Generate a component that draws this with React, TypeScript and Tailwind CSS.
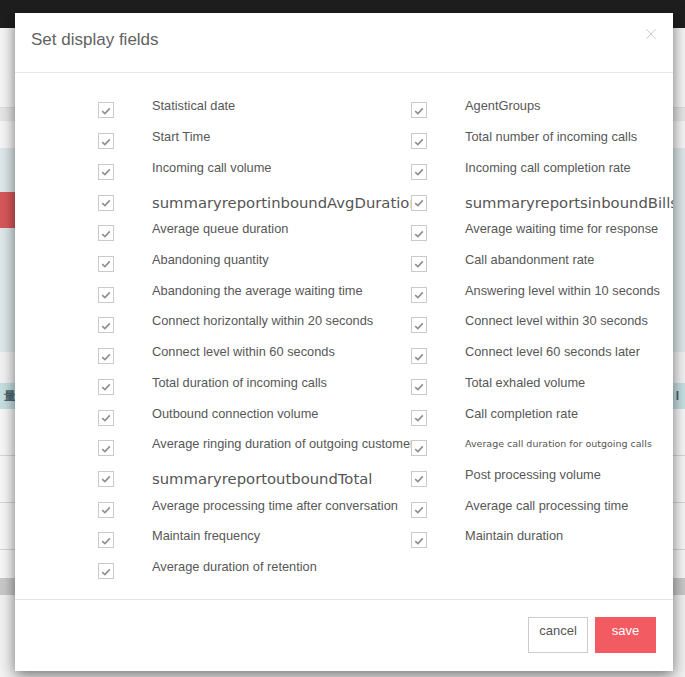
import { X } from 'lucide-react'

type Field = { label: string; kind?: 'wide' | 'small' }

const left: Field[] = [
  { label: 'Statistical date' },
  { label: 'Start Time' },
  { label: 'Incoming call volume' },
  { label: 'summaryreportinboundAvgDuration', kind: 'wide' },
  { label: 'Average queue duration' },
  { label: 'Abandoning quantity' },
  { label: 'Abandoning the average waiting time' },
  { label: 'Connect horizontally within 20 seconds' },
  { label: 'Connect level within 60 seconds' },
  { label: 'Total duration of incoming calls' },
  { label: 'Outbound connection volume' },
  { label: 'Average ringing duration of outgoing customers' },
  { label: 'summaryreportoutboundTotal', kind: 'wide' },
  { label: 'Average processing time after conversation' },
  { label: 'Maintain frequency' },
  { label: 'Average duration of retention' },
]

const right: Field[] = [
  { label: 'AgentGroups' },
  { label: 'Total number of incoming calls' },
  { label: 'Incoming call completion rate' },
  { label: 'summaryreportsinboundBillsec', kind: 'wide' },
  { label: 'Average waiting time for response' },
  { label: 'Call abandonment rate' },
  { label: 'Answering level within 10 seconds' },
  { label: 'Connect level within 30 seconds' },
  { label: 'Connect level 60 seconds later' },
  { label: 'Total exhaled volume' },
  { label: 'Call completion rate' },
  { label: 'Average call duration for outgoing calls', kind: 'small' },
  { label: 'Post processing volume' },
  { label: 'Average call processing time' },
  { label: 'Maintain duration' },
]

// interleave the two columns so the grid fills row by row
const fields: (Field | null)[] = left.flatMap((f, i) => [f, right[i] ?? null])

function Check() {
  return (
    <span className="relative z-10 flex h-4 w-4 shrink-0 items-center justify-center border border-[#cacaca] bg-white">
      <svg width="10" height="8" viewBox="0 0 10 8" className="mt-[1px]">
        <path d="M1.2 4.2 L3.9 6.6 L8.8 1.4" stroke="#8e8e8e" strokeWidth="1.6" fill="none" />
      </svg>
    </span>
  )
}

function FieldItem({ f }: { f: Field }) {
  const text =
    f.kind === 'wide'
      ? "font-['DejaVu_Sans'] text-[14.8px] text-[#555]"
      : f.kind === 'small'
        ? "mb-[9px] font-['DejaVu_Sans'] text-[9.5px] text-[#555]"
        : "mb-[8px] font-['Liberation_Sans'] text-[12.8px] text-[#575757]"
  return (
    <div className="flex h-[30.73px] items-center">
      <Check />
      <span className={`ml-[38px] whitespace-nowrap leading-4 ${text}`}>{f.label}</span>
    </div>
  )
}

function Backdrop() {
  return (
    <div className="flex h-full flex-col font-['Liberation_Sans',sans-serif]">
      <div className="h-[28px] bg-[#1e1e1e]" />
      <div className="h-[79px] bg-[#f6f6f6]" />
      <div className="h-[14px] border-t border-[#dcdcdc] bg-[#e7e7e7]" />
      <div className="h-[27px] bg-[#f7f7f7]" />
      <div className="h-[204px] bg-[#dfe8eb]">
        <div className="mt-[44px] h-[36px] w-[60px] bg-[#d8585a]" />
      </div>
      <div className="h-[31px] bg-[#f3f3f3]" />
      <div className="flex h-[26px] items-center justify-between bg-[#c7e0e3] px-[4px] text-[12px] font-bold text-[#4a6570]">
        <span>量</span>
        <span className="tracking-[2px]">NI</span>
      </div>
      <div className="h-[47px] border-b border-[#d6d6d6] bg-[#f8f8f8]" />
      <div className="h-[47px] border-b border-[#d6d6d6] bg-[#f8f8f8]" />
      <div className="h-[47px] border-b border-[#d6d6d6] bg-[#f8f8f8]" />
      <div className="h-[28px] bg-[#f8f8f8]" />
      <div className="h-[17px] bg-[#c9c9c9]" />
      <div className="flex-1 bg-[#f2f2f2]" />
    </div>
  )
}

export default function App() {
  return (
    <div className="relative h-[677px] w-[685px] overflow-hidden">
      <Backdrop />

      <div className="absolute left-[15px] top-[13px] flex h-[658px] w-[658px] flex-col overflow-hidden bg-white shadow-[0_4px_14px_rgba(0,0,0,0.55)]">
        <div className="relative flex h-[60px] shrink-0 items-center border-b border-[#e8e8e8] px-4 pb-[6px]">
          <h3 className="font-['Liberation_Sans',sans-serif] text-[17px] text-[#626262]">Set display fields</h3>
          <X size={18} strokeWidth={1.2} className="absolute right-[13px] top-[12px] text-[#c4c4c4]" />
        </div>

        <div className="grid flex-1 grid-cols-[313px_262px] content-start pl-[83px] pt-[22px]">
          {fields.map((f, i) => (f ? <FieldItem key={i} f={f} /> : <div key={i} />))}
        </div>

        <div className="flex h-[72px] shrink-0 items-start justify-end gap-[7px] border-t border-[#e5e5e5] pr-[17px] pt-[17px] font-['Liberation_Sans',sans-serif] text-[13px]">
          <button className="flex h-9 w-[60px] items-center justify-center border border-[#cccccc] bg-white pb-[8px] text-[#555]">
            cancel
          </button>
          <button className="flex h-9 w-[61px] items-center justify-center bg-[#f25b62] pb-[8px] text-white">
            save
          </button>
        </div>
      </div>
    </div>
  )
}
